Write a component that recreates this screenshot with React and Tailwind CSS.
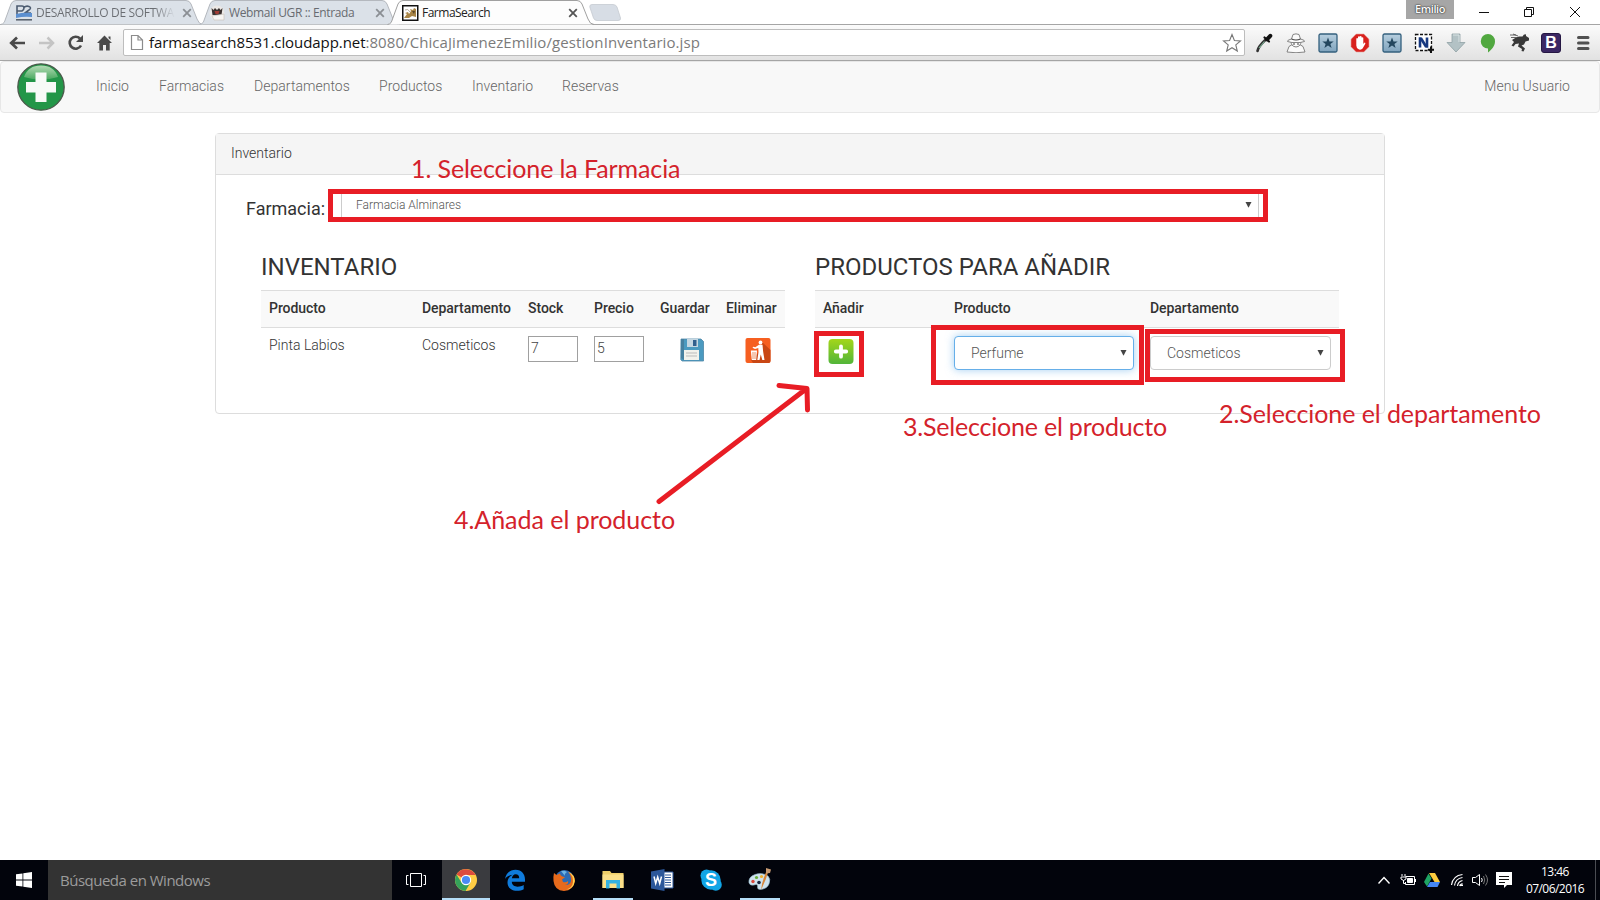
import React from 'react';

const UI = "font-['Open_Sans','Noto_Sans',sans-serif]";

function TabShape({ w, active }) {
  return (
    <svg className="absolute left-0 top-0" width={w} height="25" viewBox={`0 0 ${w} 25`}>
      <path
        d={`M0.5 24.5 C4 24 4.500 22 5.500 19 L11 4 Q12.500 0.500 16 0.500 H${w - 17} Q${w - 13.500} 0.500 ${w - 12} 4 L${w - 6} 19 Q${w - 4} 24.5 ${w} 24.5`}
        fill={active ? '#fdfdfd' : '#dbe1e8'}
        stroke={active ? '#a0a0a0' : '#b4b8be'}
      />
    </svg>
  );
}

function CloseX({ color }) {
  return (
    <svg width="10" height="10" viewBox="0 0 10 10" stroke={color} strokeWidth="1.8">
      <path d="M1.200 1.200 8.800 8.800M8.800 1.200 1.200 8.800" />
    </svg>
  );
}

function TabStrip() {
  return (
    <div className={`relative flex h-6 shrink-0 bg-white text-[12px] ${UI}`}>
      <div className="relative h-6 w-[199px]">
        <TabShape w={203} />
        <div className="relative flex h-6 items-center pl-4 pt-0.5">
          <svg width="16" height="16" viewBox="0 0 16 16">
            <path d="M1 10V1H6Q8 1 8 3T6 6H1M8 2.500Q10 .5 13 1.500T13 5L9 8H15" fill="none" stroke="#4c5b70" strokeWidth="1.600" />
            <path d="M0 9Q8 7 16 8V12Q8 11 0 13Z" fill="#5b8fd0" />
            <path d="M0 14.800H16" stroke="#555d68" strokeWidth="1.500" />
          </svg>
          <span className="ml-1 w-[139px] whitespace-nowrap bg-gradient-to-r from-[#6a6d72] from-85% to-[#dbe1e8] bg-clip-text tracking-[-0.33px] text-transparent">
            DESARROLLO DE SOFTWA
          </span>
          <span className="ml-[7px]"><CloseX color="#8b8f94" /></span>
        </div>
      </div>
      <div className="relative h-6 w-[188px]">
        <TabShape w={200} />
        <div className="relative flex h-6 items-center pl-[10px] pt-0.5">
          <svg width="16" height="16" viewBox="0 0 16 16">
            <circle cx="8" cy="8" r="7.500" fill="#ece9e6" />
            <path d="M2.500 3 4.500 5 6 3 8 5 10 3 11.500 5 13.500 3 12.500 10H3.500Z" fill="#3b3230" />
            <path d="M5.500 6H10.500L9.500 9H6.500Z" fill="#a23c33" />
            <path d="M3 11 15 9V15H5Z" fill="#f7f5f2" stroke="#c9c3bb" strokeWidth=".7" />
          </svg>
          <span className="ml-1 w-[142px] whitespace-nowrap tracking-[-0.37px] text-[#686b70]">Webmail UGR :: Entrada</span>
          <span className="ml-1"><CloseX color="#8b8f94" /></span>
        </div>
      </div>
      <div className="relative z-10 h-[25px] w-[202px]">
        <TabShape w={207} active />
        <div className="relative flex h-6 items-center pl-[15px] pt-0.5">
          <svg width="17" height="16" viewBox="0 0 17 16">
            <rect x=".75" y=".75" width="15" height="14.500" fill="#fff" stroke="#111" strokeWidth="1.500" />
            <path d="M2 13 5 9 3 8 6 7 7 9 9 6 8 4 11 5 12 3 14 4 14 12 10 11 7 13Z" fill="#a98546" />
            <path d="M10 6 13 6 12 9Z" fill="#5c4828" />
            <path d="M3 5Q6 3 8 7" stroke="#b7b0a0" fill="none" />
          </svg>
          <span className="ml-[3px] w-[146px] whitespace-nowrap tracking-[-0.5px] text-[#222]">FarmaSearch</span>
          <CloseX color="#555" />
        </div>
      </div>
      <svg className="mt-1" width="34" height="18" viewBox="0 0 34 18">
        <path d="M3 .5H24Q27 .5 28 3L31.500 14Q32 16.500 29 16.500H8Q5.500 16.500 4.500 14L.8 3Q.5 .5 3 .5Z" fill="#d7dde5" stroke="#c5cad1" strokeWidth=".8" />
      </svg>
      <div className="ml-auto flex h-6 items-start">
        <div className="h-[19px] w-12 bg-[#a6a6a6] text-center text-[11px] font-semibold leading-[18px] tracking-[-0.4px] text-white [text-shadow:0_0_2px_#222,0_0_1px_#333]">Emilio</div>
        <svg className="ml-[25px]" width="102" height="24" viewBox="0 0 102 24" fill="none" stroke="#111">
          <path d="M0 12.500H10" />
          <path d="M45.500 9.500H52.500V16.500H45.500ZM47.500 9.500V7.500H54.500V14.500H52.500" />
          <path d="M91 7 101 17M101 7 91 17" />
        </svg>
        <div className="w-[19px]" />
      </div>
    </div>
  );
}

function StarBadge() {
  return (
    <svg width="20" height="20" viewBox="0 0 20 20">
      <defs>
        <linearGradient id="sb" x2="0" y2="1">
          <stop stopColor="#b7cfdf" />
          <stop offset="1" stopColor="#7fa3bd" />
        </linearGradient>
      </defs>
      <rect x="1" y="1" width="18" height="18" rx="1.500" fill="url(#sb)" stroke="#34607e" strokeWidth="1.300" />
      <path d="M10 4.500 11.500 8.500H15.700L12.400 11 13.600 15 10 12.600 6.400 15 7.600 11 4.300 8.500H8.500Z" fill="#23465e" />
    </svg>
  );
}

function Extensions() {
  return (
    <div className="flex items-center gap-3">
      <svg width="20" height="20" viewBox="0 0 20 20">
        <path d="M3.500 18Q4 14 11.500 6.800" fill="none" stroke="#333" strokeWidth="2.600" strokeLinecap="round" />
        <path d="M5 15 10.500 8.500" stroke="#7fb598" strokeWidth="1.100" />
        <path d="M10.500 4.500 15 8.500" stroke="#111" strokeWidth="2.200" strokeLinecap="round" />
        <path d="M13 6.300 16.300 2.800" stroke="#111" strokeWidth="4" strokeLinecap="round" />
      </svg>
      <svg width="20" height="20" viewBox="0 0 20 20" fill="#fafafa" stroke="#777" strokeWidth=".9">
        <path d="M1 19 3 13.500 5.500 12Q10 15 14.500 12L17 13.500 19 19Q10 20.500 1 19Z" />
        <path d="M5 8Q5 13.500 10 14 15 13.500 15 8Z" />
        <path d="M5.500 6 7 1.500Q10 .2 13 1.500L14.500 6Q19 7 18.500 8.500 14 10 10 9.500 6 10 1.500 8.500 1 7 5.500 6Z" />
        <path d="M5.500 6Q10 8 14.500 6M7 11H9M11 11H13" stroke="#444" fill="none" strokeWidth="1.200" />
      </svg>
      <StarBadge />
      <svg width="20" height="20" viewBox="0 0 20 20">
        <path d="M6.200 1H13.800L19 6.200V13.800L13.800 19H6.200L1 13.800V6.200Z" fill="#d8211d" stroke="#e7a29d" strokeWidth=".6" />
        <path d="M6.300 9.500V5.500Q7.200 4.600 8 5.500V9 3.800Q9 2.800 9.800 3.800V8.500 3.300Q10.800 2.400 11.600 3.500V9 4.500Q12.500 3.800 13.300 4.800V11L14.500 9.500Q16 9.500 15.200 11L12.600 15.500Q11.500 17 9 16.500 6.300 15.500 6.300 12.500Z" fill="#fff" />
      </svg>
      <StarBadge />
      <svg width="20" height="20" viewBox="0 0 20 20">
        <path d="M1.500 1.500H17.500V17.500H1.500Z" fill="#fff" stroke="#111" strokeWidth="1.300" strokeDasharray="3 1.500" />
        <path d="M6 14.500V4.500M13 14.500V4.500" stroke="#17387f" strokeWidth="2.600" />
        <path d="M4.700 4.500H8L14.300 14.500H11Z" fill="#17387f" />
        <path d="M17 13.500V20M13.800 16.700H20" stroke="#111" strokeWidth="2" />
      </svg>
      <svg width="20" height="20" viewBox="0 0 20 20">
        <path d="M6 1H14V9.500H19L10 19 1 9.500H6Z" fill="#b3c2c5" stroke="#8fa1a5" strokeWidth=".8" />
        <path d="M7 2H13V9" stroke="#d9e3e4" fill="none" />
      </svg>
      <svg width="20" height="20" viewBox="0 0 20 20">
        <path d="M10 1A7.200 7.200 0 0 1 17 8.500C17 13 13.500 17 10 19.500V15.500A7.200 7.200 0 0 1 10 1Z" fill="#51a840" />
      </svg>
      <svg width="20" height="20" viewBox="0 0 20 20" fill="#383838">
        <path d="M2 7 6 4.500 9 3.500 12.500 3.500Q14 .8 16 1.500L16 3 19 5 19 7.500 15.500 8.500 14 11.500 11.500 12.500 15 15.500 13.500 18.500 11.500 18 12 16 8 13.500 9 10.500 5.500 11 3.500 13.500 1.500 12.500 4 9Z" />
        <path d="M0 2H6M1 4.500H7M3 1 8 3" stroke="#555" strokeWidth=".9" />
      </svg>
      <div className="-ml-px flex size-5 items-center justify-center rounded-[3px] border border-[#251743] bg-[#3b2763] font-['Liberation_Sans',sans-serif] text-[16px] font-bold leading-none text-white">B</div>
      <svg width="20" height="20" viewBox="0 0 20 20" stroke="#505050" strokeWidth="3" strokeLinecap="round">
        <path d="M5.500 4.500H15M5.500 10H15M5.500 15.500H15" />
      </svg>
    </div>
  );
}

function Toolbar() {
  return (
    <div className="flex h-[37px] shrink-0 items-center border-b border-t border-[#a5a5a5] bg-gradient-to-b from-[#fbfbfb] to-[#e2e2e2] pl-2">
      <svg width="108" height="20" viewBox="0 0 108 20" fill="none">
        <path d="M3 10H17M9 4.500 3.200 10 9 15.500" stroke="#4a4a4a" strokeWidth="2.700" />
        <path d="M31 10H45M39.500 4.500 45 10 39.500 15.500" stroke="#c4c4c4" strokeWidth="2.500" />
        <path d="M73 12.500A6 6 0 1 1 72 5.500" stroke="#4a4a4a" strokeWidth="2.600" />
        <path d="M75 2V9H68Z" fill="#4a4a4a" />
        <path d="M96.500 2.500 104 10H101.700V17.500H98V12H95V17.500H91.300V10H89ZM100.500 3.500H102.500V7L100.500 5Z" fill="#4a4a4a" />
      </svg>
      <div className={`ml-[7px] flex h-[27px] w-[1122px] items-center rounded-[2px] border border-[#bdbdbd] bg-white pl-1.5 text-[15px] ${UI}`}>
        <svg width="14" height="17" viewBox="0 0 14 17">
          <path d="M1.500 1.500H8L12.500 6V15.500H1.500ZM8 1.500V6H12.500" fill="#fff" stroke="#8c8c8c" strokeWidth="1.200" />
        </svg>
        <span className="ml-[5px] whitespace-nowrap tracking-[-0.07px] text-[#111]">farmasearch8531.cloudapp.net</span>
        <span className="whitespace-nowrap tracking-[0.08px] text-[#7b7b7b]">:8080/ChicaJimenezEmilio/gestionInventario.jsp</span>
        <svg className="ml-auto mr-[2px]" width="20" height="20" viewBox="0 0 20 20">
          <path d="M10 1.500 12.400 7.500 18.500 7.900 13.800 11.900 15.300 18 10 14.700 4.700 18 6.200 11.900 1.500 7.900 7.600 7.500Z" fill="#fff" stroke="#777" strokeWidth="1.100" />
        </svg>
      </div>
      <div className="ml-[9px]"><Extensions /></div>
    </div>
  );
}

const links = [
  ['Inicio', 'w-[63px]'],
  ['Farmacias', 'w-[95px]'],
  ['Departamentos', 'w-[125px]'],
  ['Productos', 'w-[93px]'],
  ['Inventario', 'w-[90px]'],
  ['Reservas', 'w-[90px]'],
];

function Navbar() {
  return (
    <nav className="flex h-[52px] shrink-0 items-center rounded border border-[#e7e7e7] bg-[#f8f8f8] pl-4 text-[14px] font-light text-[#666]">
      <svg width="48" height="48" viewBox="0 0 48 48">
        <defs>
          <linearGradient id="shine" x2="0" y2="1">
            <stop stopColor="#b4dbb5" />
            <stop offset="1" stopColor="#4aa960" />
          </linearGradient>
        </defs>
        <circle cx="24" cy="24" r="23.200" fill="#239648" stroke="#4c5a4c" strokeWidth="1.300" />
        <path d="M7 14Q11 2.500 24 2.500T41 14Q24 19 7 14Z" fill="url(#shine)" />
        <path d="M18.500 9.500H29.500V19H39V29.500H29.500V39H18.500V29.500H9V19H18.500Z" fill="#f7faf7" />
      </svg>
      <div className="ml-[31px] flex pb-0.5">
        {links.map(([t, w]) => <a key={t} className={`${w} whitespace-nowrap tracking-[0.03px]`}>{t}</a>)}
      </div>
      <a className="ml-auto mr-[29px] pb-0.5 tracking-[0.03px]">Menu Usuario</a>
    </nav>
  );
}

function Caret() {
  return <svg width="7" height="8" viewBox="0 0 7 8"><path d="M.5 1H6.500L3.500 6.800Z" fill="#444" /></svg>;
}

function Select({ value, className }) {
  return (
    <div className={`flex h-[34px] items-center justify-between rounded border bg-white pl-4 pr-[6px] text-[14px] text-[#555] ${className}`}>
      <span>{value}</span>
      <Caret />
    </div>
  );
}

const headRow = 'flex h-[38px] items-center border-y border-[#ddd] bg-[#f9f9f9] pb-px pl-2 text-[14px] font-medium tracking-[-0.05px] text-[#333]';
const field = 'h-[26px] w-[50px] border border-[#a0a0a0] pl-0.5 leading-[22px] text-[#444]';

function InventoryTable() {
  return (
    <section className="w-[524px]">
      <h3 className="h-[36px] text-[24px] font-normal leading-[27px] text-[#333]">INVENTARIO</h3>
      <div className={headRow}>
        <span className="w-[153px]">Producto</span>
        <span className="w-[106px]">Departamento</span>
        <span className="w-[66px]">Stock</span>
        <span className="w-[66px]">Precio</span>
        <span className="w-[66px]">Guardar</span>
        <span>Eliminar</span>
      </div>
      <div className="flex items-start pl-2 pt-2 text-[14px] text-[#333]">
        <span className="w-[153px] leading-[18px]">Pinta Labios</span>
        <span className="w-[106px] leading-[18px]">Cosmeticos</span>
        <div className="w-[66px]"><div className={field}>7</div></div>
        <div className="w-[66px]"><div className={field}>5</div></div>
        <svg className="ml-5 mt-[2px]" width="24" height="24" viewBox="0 0 24 24">
          <path d="M1 1H21L23.500 3.500V23H2L.8 21.500Z" fill="#4b9ac0" stroke="#4f87a6" strokeWidth=".8" />
          <path d="M1 1H4V22L1 20Z" fill="#47809f" />
          <path d="M7 1H18V9H7Z" fill="#c5d7e2" />
          <path d="M13 2H16.500V8H13Z" fill="#315f8d" />
          <path d="M4 12H19V22H4Z" fill="#f2f2ec" />
          <path d="M6 15H17M6 18H17" stroke="#bbb" />
        </svg>
        <svg className="ml-[41px] mt-[2px]" width="26" height="25" viewBox="0 0 26 25">
          <rect width="25" height="25" x=".5" rx="2" fill="#f65f20" />
          <path d="M17 4 25.500 12V23Q25.500 25 23.500 25H8L6 22 16 12Z" fill="#c94714" />
          <circle cx="15.500" cy="4.500" r="1.900" fill="#fff" />
          <path d="M14 6.800H17.500L18.200 14 19.500 22H17.300L15.800 16.500 14.500 22H12.300L13.500 14 13.300 10 10 11 7.500 9.800 8.300 8.800 10.300 9.300Z" fill="#fff" />
          <path d="M5.800 12.500H12L11.200 22H6.800Z" fill="#fff" />
          <path d="M8 14V21M10 14V21" stroke="#e1601f" strokeWidth=".7" />
        </svg>
      </div>
    </section>
  );
}

function AddTable() {
  return (
    <section className="w-[524px]">
      <h3 className="h-[36px] text-[24px] font-normal leading-[27px] text-[#333]">PRODUCTOS PARA AÑADIR</h3>
      <div className={headRow}>
        <span className="w-[131px]">Añadir</span>
        <span className="w-[196px]">Producto</span>
        <span>Departamento</span>
      </div>
      <div className="flex items-start pl-2 pt-2">
        <svg className="ml-[5px] mt-[3px]" width="26" height="25" viewBox="0 0 26 25">
          <defs>
            <linearGradient id="add" x2="0" y2="1">
              <stop stopColor="#a4d61a" />
              <stop offset="1" stopColor="#52b53a" />
            </linearGradient>
          </defs>
          <rect x=".5" width="25" height="25" rx="4" fill="url(#add)" />
          <path d="M13 7.300V17.700M7.800 12.500H18.200" stroke="#fff" strokeWidth="3.800" strokeLinecap="round" />
        </svg>
        <Select value="Perfume" className="ml-[100px] w-[180px] border-[#66afe9] shadow-[0_0_8px_rgba(102,175,233,0.6)]" />
        <Select value="Cosmeticos" className="ml-4 w-[181px] border-[#ccc]" />
      </div>
    </section>
  );
}

function Panel() {
  return (
    <div className="mx-auto mt-5 h-[281px] w-[1170px] rounded border border-[#ddd] bg-white font-light">
      <div className="h-[41px] border-b border-[#ddd] bg-[#f5f5f5] pl-[15px] text-[14px] leading-[39px] text-[#333]">Inventario</div>
      <div className="flex h-[79px] pl-[30px] pt-[13px]">
        <span className="w-[82px] pt-2 text-[18px] font-normal leading-[26px] text-[#333]">Farmacia:</span>
        <div className="ml-[13px] mt-[5px] flex h-[28px] w-[918px] items-center justify-between border-x border-[#ccc] pb-1 pl-[14px] pr-[6px] text-[12px] text-[#555]">
          <span>Farmacia Alminares</span>
          <Caret />
        </div>
      </div>
      <div className="flex gap-[30px] pl-[45px]">
        <InventoryTable />
        <AddTable />
      </div>
    </div>
  );
}

const note = "absolute whitespace-nowrap font-['Lato',sans-serif] text-[25px] leading-[30px] text-[#d4222b]";
const frame = 'absolute border-[5px] border-[#e81d25]';

function Annotations() {
  return (
    <div className="pointer-events-none absolute inset-0">
      <div className={`${frame} left-[328px] top-[189px] h-[33px] w-[940px]`} />
      <div className={`${frame} left-[814px] top-[331px] h-[46px] w-[50px]`} />
      <div className={`${frame} left-[931px] top-[325px] h-[60px] w-[213px]`} />
      <div className={`${frame} left-[1145px] top-[329px] h-[53px] w-[200px]`} />
      <div className={`${note} left-[411px] top-[153px] tracking-[-0.1px]`}>1. Seleccione la Farmacia</div>
      <div className={`${note} left-[1219px] top-[398px] tracking-[-0.07px]`}>2.Seleccione el departamento</div>
      <div className={`${note} left-[903px] top-[411px] tracking-[-0.2px]`}>3.Seleccione el producto</div>
      <div className={`${note} left-[454px] top-[504px] tracking-[-0.03px]`}>4.Añada el producto</div>
      <svg className="absolute left-[650px] top-[376px]" width="170" height="136" viewBox="0 0 170 136" fill="none" stroke="#e81d25" strokeWidth="5" strokeLinecap="round" strokeLinejoin="round">
        <path d="M9 125.500 156 13M129 9.500 157 12.500 157.500 34" />
      </svg>
    </div>
  );
}

function AppTile({ children, open, active }) {
  return (
    <div className={`flex h-10 w-12 flex-col items-center justify-center ${active ? 'bg-[#3a3b3f]' : ''}`}>
      <div className="flex h-[38px] items-center pt-[2px]">{children}</div>
      <div className={`h-0.5 ${active ? 'w-12 bg-[#b5ddf7]' : open ? 'w-10 bg-[#b5ddf7]' : 'w-10'}`} />
    </div>
  );
}

function Taskbar() {
  return (
    <footer className={`mt-auto flex h-10 shrink-0 items-center bg-[#02040c] text-white ${UI}`}>
      <div className="flex w-12 justify-center">
        <svg width="16" height="16" viewBox="0 0 16 16" fill="#fff"><path d="M0 2.300 6.500 1.400V7.600H0ZM7.300 1.200 16 0V7.600H7.300ZM0 8.400H6.500V14.600L0 13.700ZM7.300 8.400H16V16L7.300 14.800Z" /></svg>
      </div>
      <div className="flex h-10 w-[344px] items-center bg-[#333] pl-3 text-[15px] tracking-[-0.5px] text-[#9c9c9c]">Búsqueda en Windows</div>
      <svg className="ml-[14px]" width="20" height="16" viewBox="0 0 20 16" fill="none" stroke="#fff">
        <path d="M4.500 1.500H15.500V14.500H4.500ZM2.500 3.500H.5V12.500H2.500M17.500 3.500H19.500V12.500H17.500" />
      </svg>
      <div className="ml-4 flex gap-px">
        <AppTile active>
          <svg width="22" height="22" viewBox="0 0 22 22">
            <circle cx="11" cy="11" r="11" fill="#fc4" />
            <path d="M11 11 1.500 5.500A11 11 0 0 1 20.600 6H11Z" fill="#dd4b3e" />
            <path d="M1.500 5.500A11 11 0 0 0 10.500 22L15.500 13.500 11 11 6.500 13.500Z" fill="#35a15a" />
            <circle cx="11" cy="11" r="5.200" fill="#fff" />
            <circle cx="11" cy="11" r="4.100" fill="#4a8af4" />
          </svg>
        </AppTile>
        <AppTile>
          <svg width="22" height="22" viewBox="0 0 22 22">
            <path d="M1 10C2 4 6 .8 11.500 .8 18 .8 21 5.500 21 10.500V12.800H7.800C8 16.200 10.500 17.700 13.500 17.700 16 17.700 18 17 19.700 16V20.200C17.800 21.200 15.500 21.700 13 21.700 7 21.700 3.500 18.300 3.500 13.500 3.500 10 5.500 7.300 8.500 5.700 5.500 6 2.500 7.700 1 10ZM7.900 9.300H15.200C15.200 6.800 14 5.300 11.700 5.300 9.500 5.300 8.200 7.200 7.900 9.300Z" fill="#0f7bdc" />
          </svg>
        </AppTile>
        <AppTile>
          <svg width="22" height="22" viewBox="0 0 22 22">
            <circle cx="11.500" cy="10.500" r="9.500" fill="#2b6bb5" />
            <path d="M8 2Q11 1 14 3 11 5 12 7Z" fill="#6db4e4" />
            <path d="M1 4 3.500 6 7 4.500Q7 6.500 9.500 7.500L12 8.300 9 10.500 10 13Q13 14 15 12 16 15 12 16 17 16.500 18 12 18.500 7 15 2.500 22 6 22 12 20.500 21.500 11 22 1.500 21.500 .5 12 0 8 1 4Z" fill="#e66a1c" />
            <path d="M15.500 3Q20.500 7 20 13T13 20.500Q20.500 20.500 21.800 12 21.500 5.500 15.500 3Z" fill="#ffd34f" />
          </svg>
        </AppTile>
        <AppTile open>
          <svg width="22" height="20" viewBox="0 0 22 20">
            <path d="M.5 1H8L9.500 3H21.500V18H.5Z" fill="#efcf6a" />
            <path d="M.5 4.500H21.500V18H.5Z" fill="#fbe08a" />
            <path d="M4 10H18V18.500H14.500V13.500H7.500V18.500H4Z" fill="#35b1e1" />
          </svg>
        </AppTile>
        <AppTile>
          <svg width="23" height="22" viewBox="0 0 23 22">
            <path d="M12 3H22V19H12Z" fill="#fff" stroke="#2b579a" />
            <path d="M14 6H20M14 8.500H20M14 11H20M14 13.500H20M14 16H20" stroke="#2b579a" />
            <path d="M0 2.500 13.500 0V22L0 19.500Z" fill="#2b579a" />
            <path d="M3 7.500 4.700 14.500 6.700 8 8.700 14.500 10.500 7.500" fill="none" stroke="#fff" strokeWidth="1.500" />
          </svg>
        </AppTile>
        <AppTile>
          <div className="relative flex size-[22px] items-center justify-center">
            <svg className="absolute inset-0" width="22" height="22" viewBox="0 0 22 22" fill="#11a5e6">
              <circle cx="11" cy="11" r="9.700" /><circle cx="6.500" cy="6.500" r="6" /><circle cx="15.800" cy="15.800" r="6" />
            </svg>
            <span className="relative font-['Liberation_Sans',sans-serif] text-[18px] font-bold leading-none">S</span>
          </div>
        </AppTile>
        <AppTile open>
          <svg width="24" height="24" viewBox="0 0 24 24">
            <path d="M1 15Q0 9 7 6.500T20 8Q23 11 21 16T12 21.500Q9 21.500 9.500 18.500T6 17Q2 18 1 15Z" fill="#cfe3ee" stroke="#8fb3c6" strokeWidth=".6" />
            <circle cx="5" cy="13.500" r="1.700" fill="#d9493c" /><circle cx="8.500" cy="9.500" r="1.600" fill="#67b13c" /><circle cx="13.500" cy="8.500" r="1.600" fill="#f0b22c" /><circle cx="11" cy="14.500" r="1.800" fill="#1a2740" />
            <path d="M20.500 3Q18 12 13 22 14 13 18.500 3Z" fill="#d8873a" />
            <path d="M18 0 23 1.500 22 5 18 5.500Z" fill="#c79a72" />
          </svg>
        </AppTile>
      </div>
      <svg className="ml-auto" width="136" height="24" viewBox="0 0 136 24" fill="none" stroke="#fff">
        <path d="M.5 15.500 6 9.500 11.500 15.500" strokeWidth="1.400" />
        <path d="M27.500 8.500H36.500V16.500H27.500V14M37.500 11V14M24 6V8M27 6V8M23 9H28V11L25.500 12.500 23 11ZM25.500 12V15.500H27" />
        <path d="M29.500 10.500H34.500V14.500H29.500Z" fill="#fff" />
        <g stroke="none">
          <path d="M51 5H57L62 14H56.500Z" fill="#fbcb3e" />
          <path d="M50.500 5.500 53.500 10.500 49 18.500 46 14Z" fill="#1fa463" />
          <path d="M52 14H62L59.500 19H49Z" fill="#4586f3" />
        </g>
        <path d="M73.500 17Q75 7.500 84.500 6.500M76.500 17.500Q77.500 10.500 84.500 9.500M79.500 18Q80 13.500 84.500 12.500M82 18Q82.500 16 84.500 15.500" strokeWidth="1.200" />
        <path d="M81.500 16.500H85V18H81.500Z" fill="#fff" stroke="none" />
        <path d="M94.500 9.500H97.500L101.500 6.500V17.500L97.500 14.500H94.500ZM103.500 10Q105 12 103.500 14" />
        <path d="M105.500 8Q108 12 105.500 16M107.500 6.500Q111.500 12 107.500 17.500" stroke="#777" />
        <path d="M118 4H134V17H129L126 20V17H118Z" fill="#fff" stroke="none" />
        <path d="M121 8.500H131M121 11.500H131M121 14.500H127" stroke="#111" />
      </svg>
      <div className="ml-2 w-[66px] text-center text-[12px] leading-[17px] tracking-[-0.55px]">
        <div>13:46</div>
        <div>07/06/2016</div>
      </div>
      <div className="ml-[7px] mr-1 h-10 w-px bg-[#4a4c52]" />
    </footer>
  );
}

export default function App() {
  return (
    <div className="relative flex h-[900px] w-[1600px] flex-col overflow-hidden bg-white font-['Roboto',sans-serif]">
      <TabStrip />
      <Toolbar />
      <Navbar />
      <Panel />
      <Annotations />
      <Taskbar />
    </div>
  );
}
